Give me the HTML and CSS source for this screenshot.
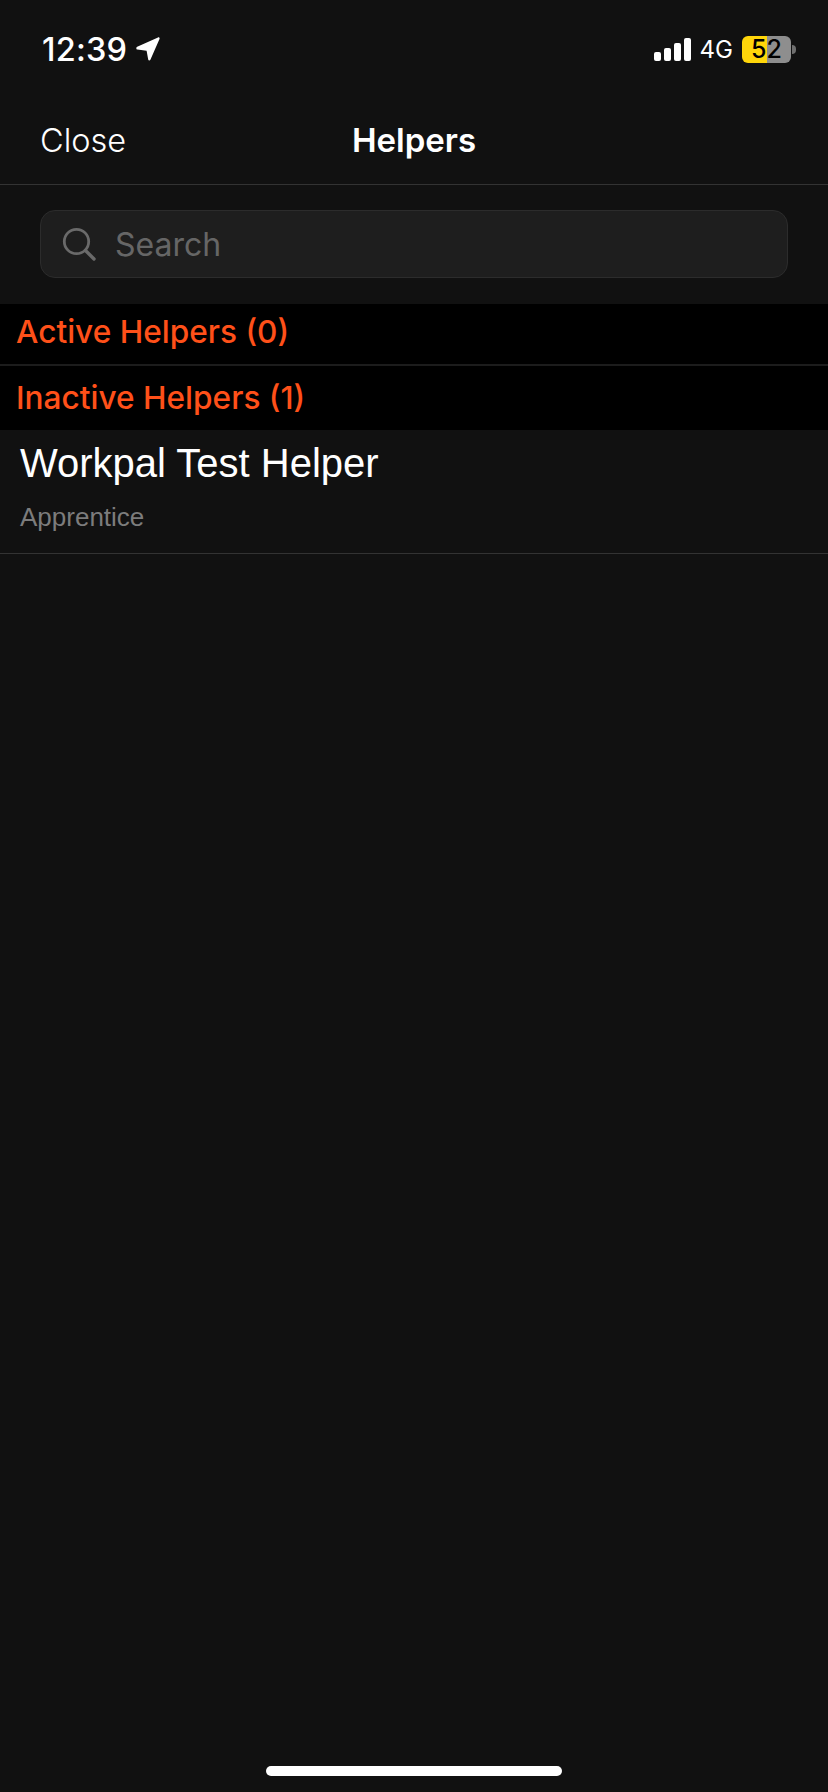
FILE: index.html
```html
<!DOCTYPE html>
<html lang="en">
<head>
  <meta charset="UTF-8" />
  <meta name="viewport" content="width=device-width, initial-scale=1.0" />
  <title>Helpers</title>
  <link rel="stylesheet" href="styles.css">
</head>
<body>
  <div class="status-bar">
    <div class="status-left">
      <span class="time">12:39</span>
      <svg class="location" viewBox="0 0 24 24" width="24" height="24">
        <path d="M1.200 9.800 22 .4c1-.4 1.900.5 1.500 1.500L14.400 22.800c-.5 1.100-2 1-2.200-.2L10.600 13.800 1.400 12.600c-1.300-.2-1.500-2.200-.2-2.800z" fill="#fff"/>
      </svg>
    </div>
    <div class="status-right">
      <div class="signal">
        <span class="bar bar1"></span>
        <span class="bar bar2"></span>
        <span class="bar bar3"></span>
        <span class="bar bar4"></span>
      </div>
      <span class="network">4G</span>
      <div class="battery">
        <span class="battery-level">52</span>
      </div>
      <span class="battery-tip"></span>
    </div>
  </div>

  <header class="nav-bar">
    <a class="close">Close</a>
    <h1>Helpers</h1>
  </header>

  <div class="search-wrap">
    <div class="search">
      <svg class="search-icon" viewBox="0 0 34 34" width="34" height="34">
        <circle cx="14.500" cy="14.500" r="12.200" fill="none" stroke="#6a6a6a" stroke-width="2.800"/>
        <path d="M23.500 23.500 32 32" fill="none" stroke="#6a6a6a" stroke-width="3.400" stroke-linecap="round"/>
      </svg>
      <span class="placeholder">Search</span>
    </div>
  </div>

  <section class="group active-group">
    <h2>Active Helpers (0)</h2>
  </section>
  <section class="group inactive-group">
    <h2>Inactive Helpers (1)</h2>
  </section>

  <div class="helper">
    <p class="helper-name">Workpal Test Helper</p>
    <p class="helper-role">Apprentice</p>
  </div>

  <div class="home-indicator"></div>
</body>
</html>
```

FILE: styles.css
```css
:root {
  --bg: #111111;
  --orange: #ff5019;
  --line: #333333;
}

* {
  box-sizing: border-box;
  margin: 0;
  padding: 0;
}

body {
  background: var(--bg);
  color: #fff;
  font-family: Inter, sans-serif;
  height: 1792px;
  overflow: hidden;
  display: flex;
  flex-direction: column;
}

/* status bar */
.status-bar {
  height: 92px;
  padding: 6px 32px 0 42px;
  display: flex;
  justify-content: space-between;
  align-items: center;
}

.status-left {
  display: flex;
  align-items: center;
  gap: 9px;
}

.time {
  font-size: 32.500px;
  font-weight: 500;
  letter-spacing: 0.2px;
}

.status-right {
  display: flex;
  align-items: center;
}

.signal {
  display: flex;
  align-items: flex-end;
  gap: 3px;
  height: 23px;
}

.bar {
  width: 7px;
  background: #fff;
  border-radius: 2px;
}

.bar1 { height: 9px; }
.bar2 { height: 13px; }
.bar3 { height: 18px; }
.bar4 { height: 23px; }

.network {
  font-size: 24px;
  margin-left: 9px;
  margin-right: 9px;
}

.battery {
  width: 49px;
  height: 27px;
  border-radius: 6px;
  background: linear-gradient(to right, #ffd60a 50%, #8e8e8e 50%);
  display: flex;
  align-items: center;
  justify-content: center;
}

.battery-level {
  color: #000;
  font-size: 25px;
  font-weight: 500;
}

.battery-tip {
  width: 4px;
  height: 9px;
  margin-left: 1px;
  background: #6f6f6f;
  border-radius: 0 4px 4px 0;
}

/* nav */
.nav-bar {
  height: 93px;
  padding-top: 4px;
  border-bottom: 1px solid var(--line);
  display: flex;
  align-items: center;
  justify-content: center;
  position: relative;
}

.close {
  position: absolute;
  left: 40px;
  top: 29px;
  font-size: 32.500px;
  font-weight: 300;
}

.nav-bar h1 {
  font-size: 33px;
  font-weight: 600;
}

/* search */
.search-wrap {
  padding: 25px 40px 26px;
}

.search {
  height: 68px;
  background: #1e1e1e;
  border: 1px solid #2c2c2c;
  border-radius: 15px;
  display: flex;
  align-items: center;
  padding-left: 21px;
  gap: 19px;
}

.placeholder {
  font-size: 32px;
  color: #666666;
}

/* sections */
.group {
  background: #000;
  height: 62px;
  padding: 8px 16px 0;
  border-bottom: 2px solid #1c1c1c;
}

.inactive-group {
  height: 64px;
  padding-top: 12px;
  border-bottom: none;
}

.group h2 {
  color: var(--orange);
  font-size: 31.600px;
  font-weight: 500;
  line-height: 40px;
}

/* list row */
.helper {
  height: 124px;
  padding: 9px 20px 0;
  border-bottom: 1px solid var(--line);
  font-family: "Liberation Sans", Arial, sans-serif;
}

.helper-name {
  font-size: 40px;
  line-height: 48px;
}

.helper-role {
  font-size: 26px;
  line-height: 32px;
  margin-top: 14px;
  color: #7c7c7c;
}

.home-indicator {
  position: absolute;
  left: 266px;
  top: 1766px;
  width: 296px;
  height: 10px;
  background: #fff;
  border-radius: 5px;
}
```
